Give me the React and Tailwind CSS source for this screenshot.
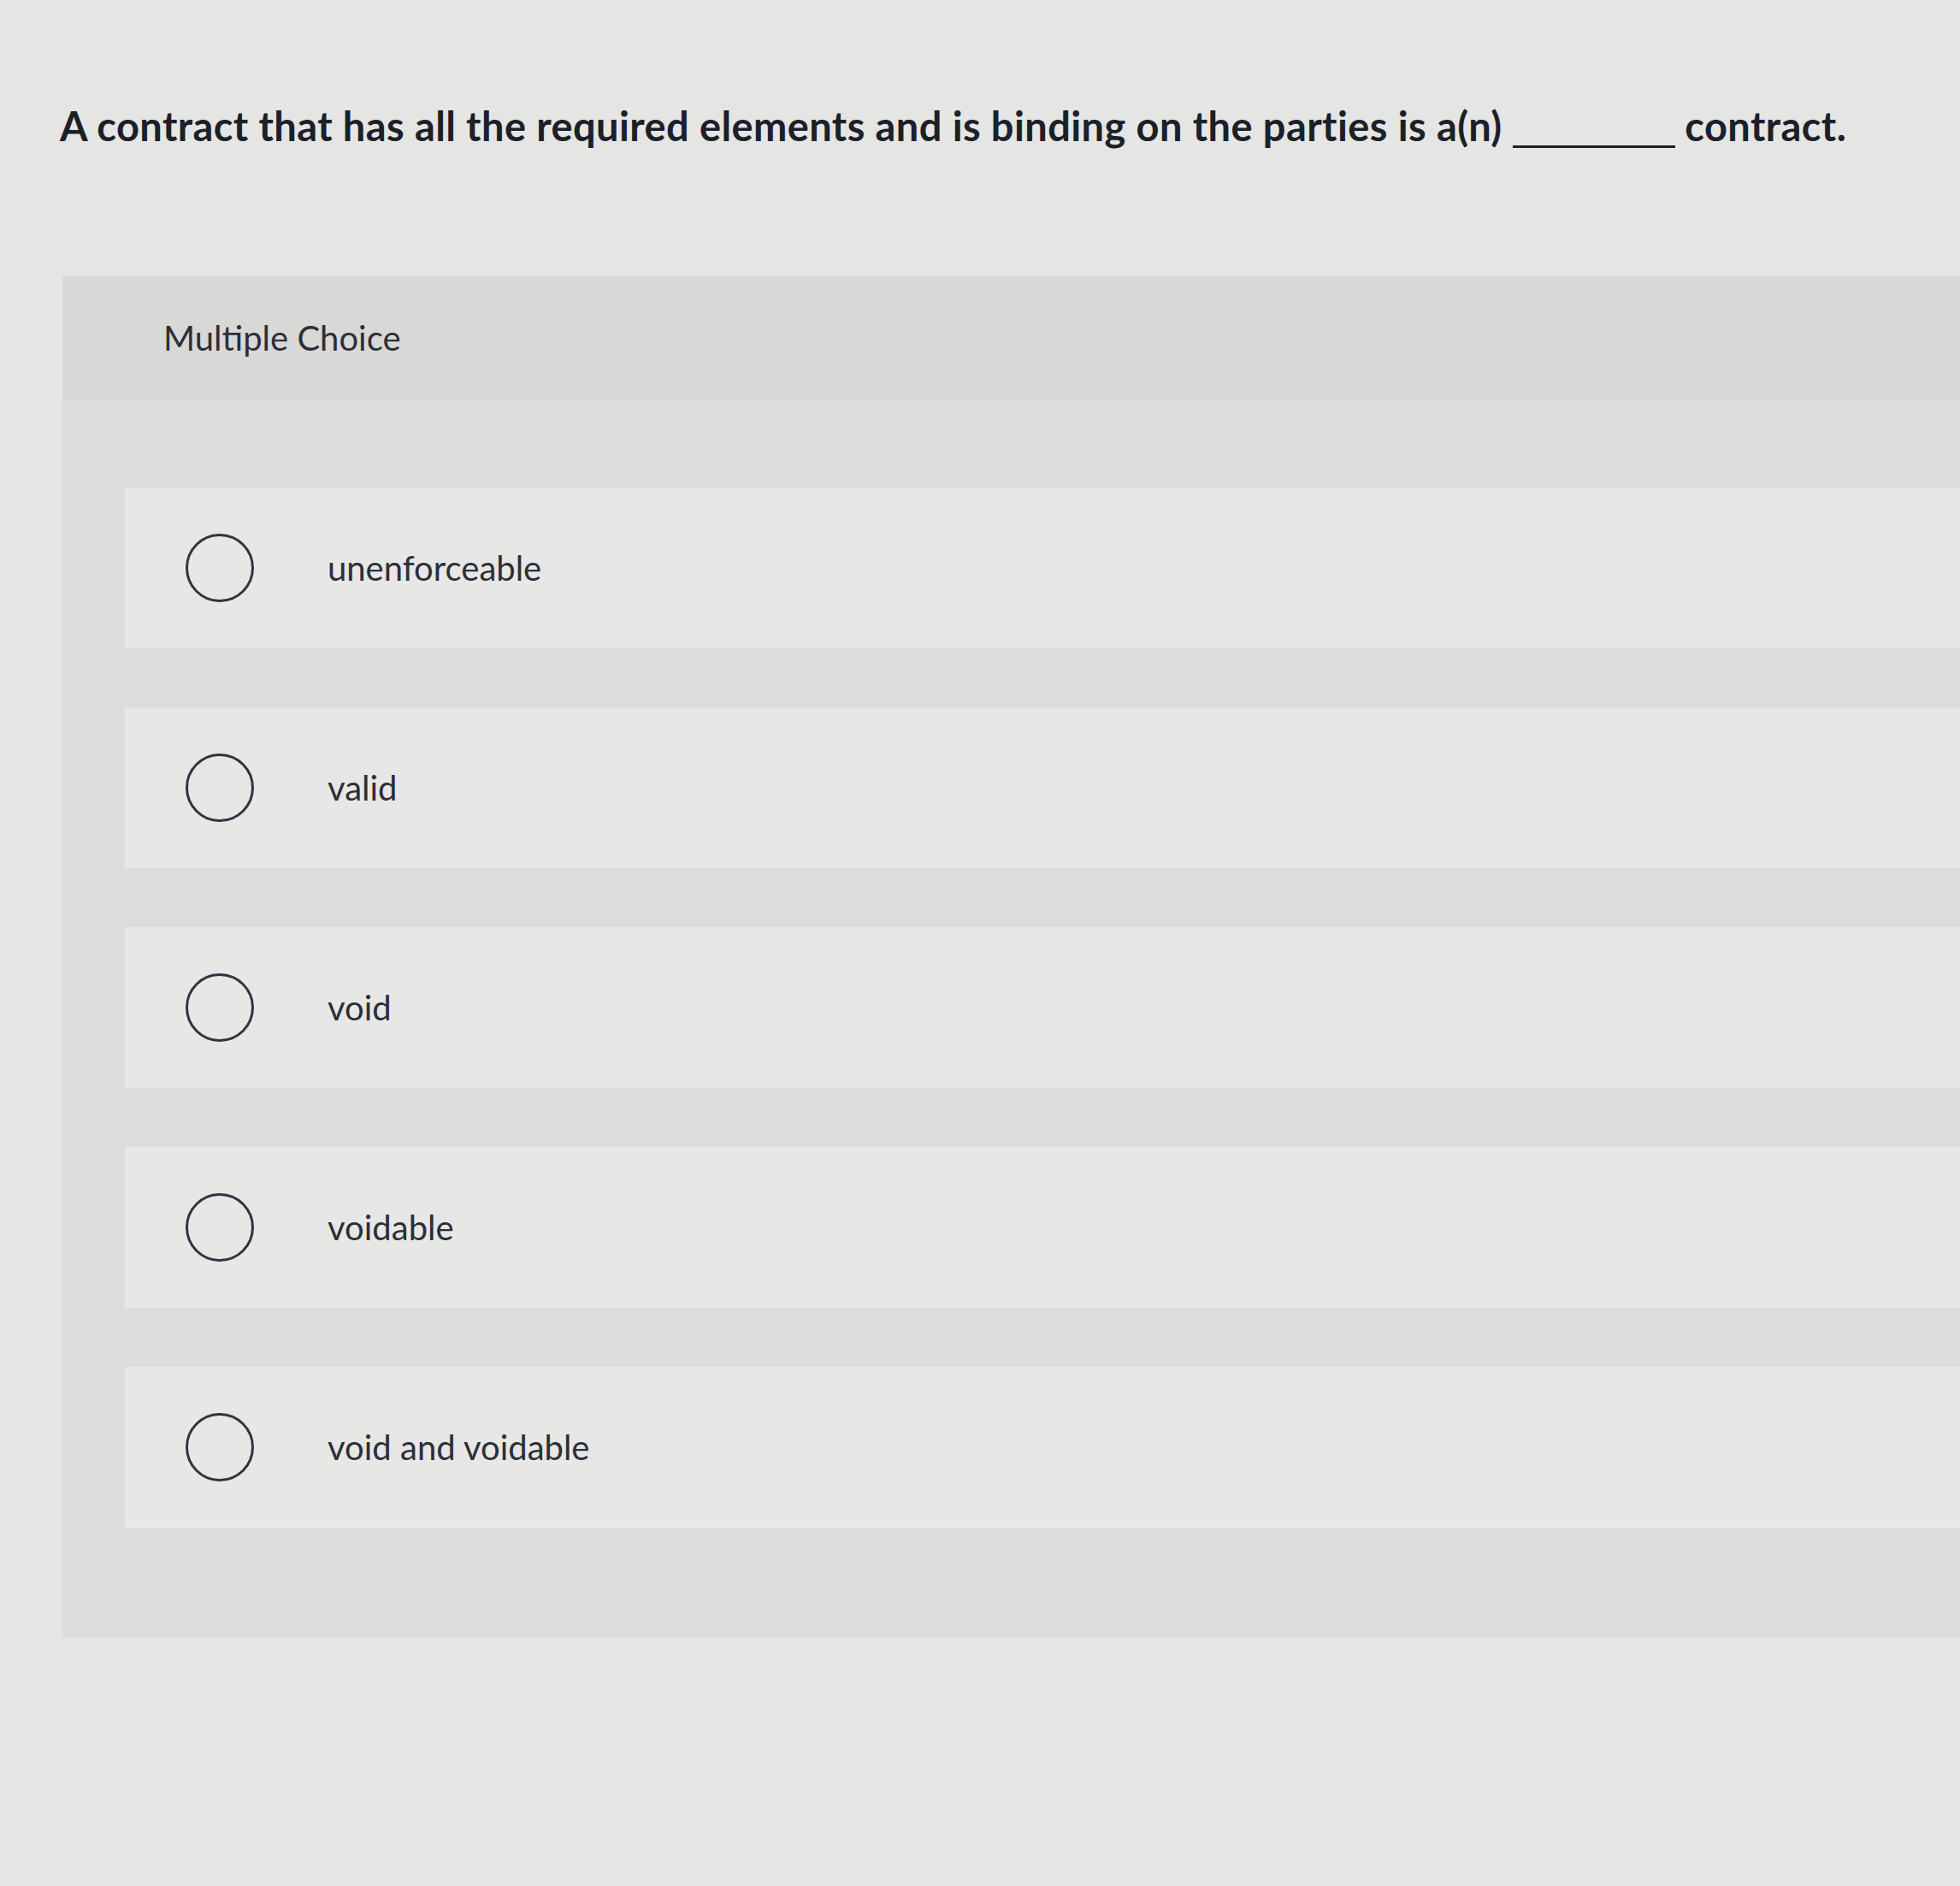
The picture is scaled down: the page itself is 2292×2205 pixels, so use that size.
import React from "react";

const options = [
  "unenforceable",
  "valid",
  "void",
  "voidable",
  "void and voidable",
];

const Radio = () => (
  <span className="block h-[80px] w-[80px] shrink-0 rounded-full border-[3px] border-[#2f3540]" />
);

export default function App() {
  return (
    <div
      className="min-h-[2205px] w-full bg-[#e5e5e3] pb-[290px]"
      style={{ fontFamily: "Lato, 'Open Sans', sans-serif" }}
    >
      {/* Question */}
      <div className="pl-[70px] pt-[116px] text-[47px] font-bold leading-[62px] tracking-[0.4px] text-[#1b2029]">
        A contract that has all the required elements and is binding on the
        parties is a(n){" "}
        <span className="inline-block w-[190px] translate-y-[8px] border-b-[3px] border-[#1b2029]" />{" "}
        contract.
      </div>

      {/* Answer panel */}
      <div className="ml-[73px] mt-[144px] bg-[#dcdcdb] pb-[129px]">
        <div className="flex h-[146px] items-center bg-[#d8d8d7] pl-[118px] text-[40px] leading-none text-[#2b2f37]">
          Multiple Choice
        </div>

        <div className="flex flex-col gap-[69px] pl-[73px] pt-[102px]">
          {options.map((opt) => (
            <label
              key={opt}
              className="flex h-[188px] cursor-pointer items-center bg-[#e7e7e6] pl-[71px]"
            >
              <Radio />
              <span className="pl-[86px] text-[40px] leading-none text-[#2b2f37]">
                {opt}
              </span>
            </label>
          ))}
        </div>
      </div>
    </div>
  );
}
